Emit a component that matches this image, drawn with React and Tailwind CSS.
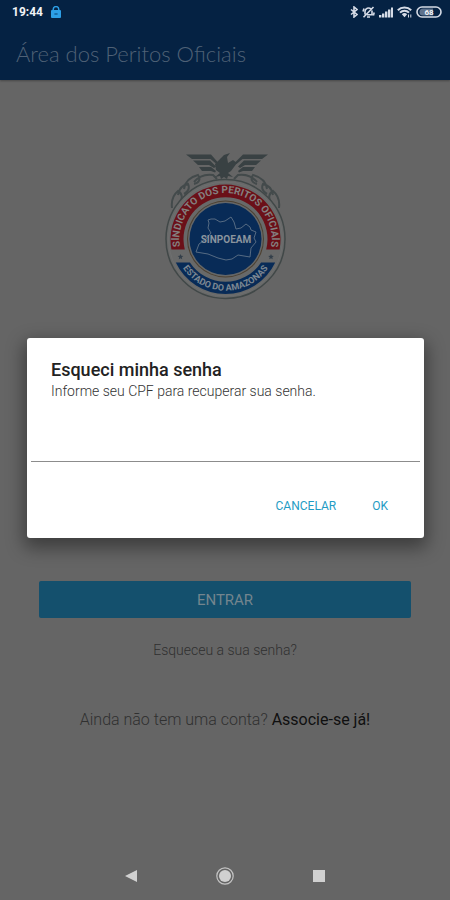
import React from "react";

function StatusBar() {
  return (
    <div className="flex h-6 items-center justify-between pl-3 pr-2 text-[#d5dbe6]">
      <div className="flex items-center gap-2">
        <span className="text-[12px] leading-4 font-bold text-[#f1f3f6]">19:44</span>
        <svg className="h-3 w-[10px]" viewBox="0 0 10 12" aria-hidden="true">
          <path d="M2.2 5V3.4a2.8 2.8 0 0 1 5.6 0V5" fill="none" stroke="#2d9fe6" strokeWidth="1.5" />
          <rect x="0" y="4" width="10" height="8" rx="1" fill="#2d9fe6" />
          <path d="M3.4 8h3.2" stroke="#0b4f83" strokeWidth="1.2" />
        </svg>
      </div>
      <div className="flex items-center gap-1">
        <svg className="h-3 w-2" viewBox="0 0 8 12" fill="none" stroke="currentColor" strokeWidth="1.6" aria-hidden="true">
          <path d="M1 3.5l6 5L4 11V1l3 2.5-6 5" />
        </svg>
        <svg className="h-3 w-[13px]" viewBox="0 0 13 12" fill="none" stroke="currentColor" strokeWidth="1.6" aria-hidden="true">
          <path d="M3 8.5V5.4a3.5 3.5 0 0 1 6-2.3M10 4.5v4.2H5M5 11h3M1.5 11.2L11.5 1M1 5.5l1-3M12.2 6.5l-.8 3" />
        </svg>
        <svg className="h-3 w-[14px]" viewBox="0 0 14 12" fill="currentColor" aria-hidden="true">
          <path d="M0 9h2.4v2.5H0zM3 7.5h2.4v4H3zM6 5.5h2.4v6H6zM9 3.5h2.4v8H9zM12 1.5h2v10h-2z" />
        </svg>
        <svg className="h-3 w-[15px]" viewBox="0 0 15 12" fill="none" stroke="currentColor" strokeWidth="2" aria-hidden="true">
          <path d="M.8 4.2a9.5 9.5 0 0 1 13.4 0M3 6.6a6.3 6.3 0 0 1 9 0" />
          <path d="M4.8 8.3a3.8 3.8 0 0 1 5.4 0L7.5 11.3z" fill="currentColor" stroke="none" />
          <path d="M11.5 8.5v3M13.8 8.5v3" strokeWidth="1" />
        </svg>
        <svg className="h-3 w-[26px]" viewBox="0 0 26 12" aria-hidden="true">
          <rect x="1" y="1" width="24" height="10" rx="5" fill="none" stroke="currentColor" strokeWidth="1.6" />
          <path d="M7 2.5h10v7H7a3.5 3.5 0 0 1 0-7z" fill="#5e728d" />
          <text x="13" y="9" textAnchor="middle" fontSize="8" fontWeight="700" fill="#f1f3f6">68</text>
        </svg>
      </div>
    </div>
  );
}

function Emblem() {
  return (
    <svg className="h-[170px] w-[150px]" viewBox="0 0 150 170" role="img" aria-label="SINPOEAM">
      <defs>
        <path id="arc-top" d="M30.5 108.6A46 46 0 1 1 120.5 108.6" />
        <path id="arc-bottom" d="M29 121.3A51.5 51.5 0 0 0 122 121.3" />
      </defs>
      <g fill="none" stroke="#434a4b" strokeWidth="2">
        <path d="M22 68c-1-8 1-13 6-17 4 2 5 7 2 11M28 55c1-7 5-10 10-11 2 4 0 8-4 10M34 49c1-7 6-12 14-14 3 4 1 8-4 9M44 42c5-6 12-8 19-7l4 4M129 68c1-8-1-13-6-17-4 2-5 7-2 11M123 55c-1-7-5-10-10-11-2 4 0 8 4 10M117 49c-1-7-6-12-14-14-3 4-1 8 4 9M107 42c-5-6-12-8-19-7l-4 4" />
      </g>
      <circle cx="75.5" cy="99" r="59.5" fill="#686969" stroke="#414848" strokeWidth="1.5" />
      <circle cx="75.5" cy="99" r="57" fill="none" stroke="#6e6f6f" strokeWidth="1" />
      <path d="M21.4 109.5A55 55 0 1 1 129.6 109.5H116.2A42 42 0 1 0 34.8 109.5Z" fill="#6b1018" />
      <path d="M25.8 122.5H39.9A42.6 42.6 0 0 0 111.1 122.5H125.2A55 55 0 0 1 25.8 122.5Z" fill="#082b57" />
      <circle cx="75.5" cy="99" r="38.5" fill="#4d4030" />
      <circle cx="75.5" cy="99" r="37.5" fill="#656768" />
      <circle cx="75.5" cy="99" r="36" fill="#082b57" />
      <path
        d="M58 88l1-5-1-3 3-1h4l5 3 5-1 6-4 3 5 2 7 5-1 5-4 4 3 1 3 5 2-2 6 2 4-5 6-1 9-12-2-6 4-6 1-8-2-10-4-12-2 3-8 7-5 5-6z"
        fill="none"
        stroke="#566b83"
        strokeWidth="1"
        strokeLinejoin="round"
      />
      <text x="76" y="102.5" textAnchor="middle" fontSize="10" fontWeight="700" fill="#8a949e">SINPOEAM</text>
      <text fontSize="10" fontWeight="700" fill="#848080" textAnchor="middle">
        <textPath href="#arc-top" startOffset="50%">SINDICATO DOS PERITOS OFICIAIS</textPath>
      </text>
      <text fontSize="9" fontWeight="700" fill="#7c8792" textAnchor="middle">
        <textPath href="#arc-bottom" startOffset="50%">ESTADO DO AMAZONAS</textPath>
      </text>
      <g fill="#333f4a">
        <path d="M30.5 114l.8 1.8 2 .2-1.5 1.3.4 2-1.7-1-1.7 1 .4-2-1.5-1.3 2-.2z" />
        <path d="M121 114l.8 1.8 2 .2-1.5 1.3.4 2-1.7-1-1.7 1 .4-2-1.5-1.3 2-.2z" />
      </g>
      <g fill="#394143">
        <path d="M36 14.5h25l7 8-1.5 1.5-6-5H42zM43 20.5h17l6 6-2 1.5-5-3H48zM49 27h12l5 4-1 1.5-4-1.5h-9z" />
        <path d="M118 14.5H93l-8 8 1.5 1.5 6-5H112zM111 20.5H94l-6 6 2 1.5 5-3H106zM105 27H93l-5 4 1 1.5 4-1.5h9z" />
        <path d="M65 24l6-6 3-3 6-2-3 4 1 6 5-3 4 3-6 8-3 2 5 4-5-1-1 3-3-2-3 2-1-3-5 1 5-4-4-3z" />
      </g>
    </svg>
  );
}

function ForgotPasswordDialog() {
  return (
    <div className="absolute inset-0 flex items-center justify-center pt-6 pr-[26px] pb-12 pl-[27px]">
      <form
        role="dialog"
        aria-modal="true"
        aria-labelledby="dialog-title"
        className="w-full rounded-[3px] bg-white pt-5 pb-4 shadow-[0_7px_18px_3px_rgba(0,0,0,0.4)]"
        onSubmit={(event) => event.preventDefault()}
      >
        <h2 id="dialog-title" className="px-6 text-[18px] leading-6 font-medium text-[#222222]">
          Esqueci minha senha
        </h2>
        <label htmlFor="cpf" className="block px-6 text-[14px] leading-[18px] font-light text-[#333333]">
          Informe seu CPF para recuperar sua senha.
        </label>
        <div className="px-1 pt-[22px]">
          <input
            id="cpf"
            type="text"
            inputMode="numeric"
            className="block h-10 w-full border-b border-[#8c8c8c] bg-transparent px-1 text-[16px] outline-none"
          />
        </div>
        <div className="flex justify-end gap-5 pt-7 pr-7">
          <button type="button" className="h-8 px-2 text-[12px] leading-4 text-[#1f9cc4]">CANCELAR</button>
          <button type="submit" className="h-8 px-2 text-[12px] leading-4 text-[#1f9cc4]">OK</button>
        </div>
      </form>
    </div>
  );
}

export default function App() {
  return (
    <div className="relative flex min-h-screen flex-col bg-[#656565] font-[Roboto,sans-serif]">
      <header className="bg-[#052243] shadow-[0_1px_2px_rgba(0,0,0,0.3)]">
        <StatusBar />
        <h1 className="flex h-14 items-center px-4 pt-1 font-[Lato,sans-serif] text-[22px] leading-8 font-light text-[#4f6176]">
          Área dos Peritos Oficiais
        </h1>
      </header>

      <main className="flex flex-1 flex-col items-center justify-between px-[39px] pt-[60px] pb-[168px]">
        <Emblem />
        <div className="flex w-full flex-col items-center">
          <button type="button" className="h-[37px] w-full rounded-xs bg-[#14506d] text-[15px] leading-6 text-[#73858e]">
            ENTRAR
          </button>
          <a href="#recuperar" className="mt-5 text-[14px] leading-6 font-light text-[#303030]">Esqueceu a sua senha?</a>
          <p className="mt-[46px] text-[16px] leading-6 font-light text-[#303030]">
            Ainda não tem uma conta?{" "}
            <a href="#associar" className="font-normal text-[#101010]">Associe-se já!</a>
          </p>
        </div>
      </main>

      <ForgotPasswordDialog />

      <nav className="absolute inset-x-0 bottom-0 flex h-12 items-center justify-center gap-[70px]">
        <button type="button" aria-label="Voltar" className="flex size-6 items-center justify-center">
          <svg className="size-3" viewBox="0 0 12 12" fill="#d0d0d0"><path d="M12 0v12L0 6z" /></svg>
        </button>
        <button type="button" aria-label="Início" className="flex size-6 items-center justify-center">
          <svg className="size-5" viewBox="0 0 20 20">
            <circle cx="10" cy="10" r="8.2" fill="none" stroke="#c4c4c4" strokeWidth="1.2" />
            <circle cx="10" cy="10" r="6" fill="#d0d0d0" />
          </svg>
        </button>
        <button type="button" aria-label="Recentes" className="flex size-6 items-center justify-center">
          <svg className="size-3" viewBox="0 0 12 12" fill="#d0d0d0"><path d="M0 0h12v12H0z" /></svg>
        </button>
      </nav>
    </div>
  );
}
